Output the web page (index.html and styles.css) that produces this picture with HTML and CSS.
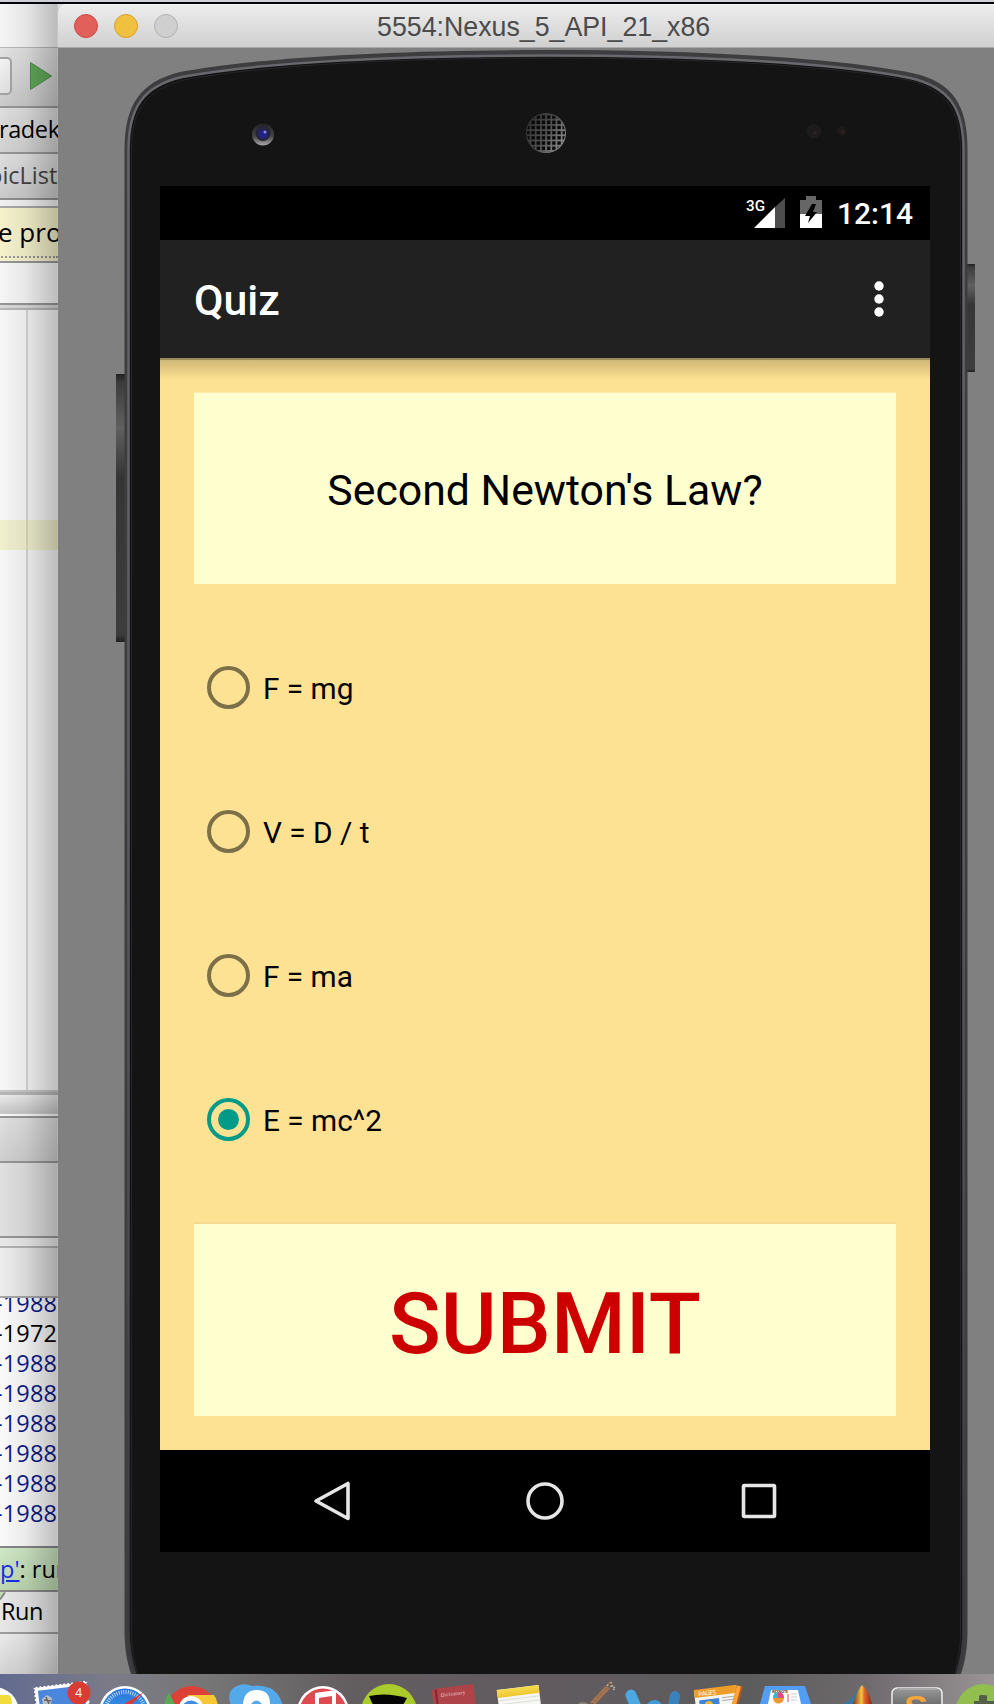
FILE: index.html
```html
<!DOCTYPE html>
<html lang="en">
<head>
<meta charset="utf-8">
<title>5554:Nexus_5_API_21_x86</title>
<link rel="stylesheet" href="styles.css">
</head>
<body>
<div class="desktop">
  <div class="menubar-edge"></div>
  <div class="workspace">
    <aside class="ide">
      <div class="ide-title"></div>
      <div class="ide-toolbar">
        <span class="combo"></span>
        <svg class="play" width="22" height="30" viewBox="0 0 22 30"><path d="M.5 1.500 21.500 15 .5 28.500z" fill="#64ad5b" stroke="#4b9545" stroke-width="1"/></svg>
      </div>
      <div class="ide-crumb"><span>radek</span></div>
      <div class="ide-tab"><span>picList</span></div>
      <div class="ide-gap"></div>
      <div class="ide-notice"><span>e pro</span></div>
      <div class="ide-blank"></div>
      <div class="ide-rule"></div>
      <div class="ide-editor"><div class="gutter"></div><div class="active-line"></div></div>
      <div class="ide-split"></div>
      <div class="ide-panel-a"></div>
      <div class="ide-panel-b"></div>
      <div class="ide-panel-c"></div>
      <div class="ide-panel-d"></div>
      <div class="ide-log">
        <p>-1988</p><p class="dark">-1972</p><p>-1988</p><p>-1988</p><p>-1988</p><p>-1988</p><p>-1988</p><p>-1988</p>
      </div>
      <div class="ide-status"><a>p'</a>: run</div>
      <div class="ide-run"><svg width="6" height="12" viewBox="0 0 6 12"><path d="M0 0H5L0 8z" fill="#c4dfb9"/><path d="M0 7.500 5 .5" stroke="#8b8b8b" stroke-width="2"/></svg><span>Run</span></div>
      <div class="ide-foot"></div>
      <div class="ide-shade"></div>
    </aside>
    <main class="window">
      <header class="titlebar">
        <div class="lights"><i class="red"></i><i class="yellow"></i><i class="off"></i></div>
        <h1>5554:Nexus_5_API_21_x86</h1>
      </header>
      <section class="stage">
        <svg class="device" width="936" height="1626" viewBox="58 48 936 1626">
          <defs>
            <linearGradient id="key" x1="0" y1="0" x2="0" y2="1"><stop offset="0" stop-color="#222"/><stop offset=".03" stop-color="#3b3b3b"/><stop offset=".2" stop-color="#606060"/><stop offset=".38" stop-color="#353535"/><stop offset=".97" stop-color="#3d3d3d"/><stop offset="1" stop-color="#202020"/></linearGradient>
            <linearGradient id="rim" x1="0" y1="0" x2="0" y2="1"><stop offset="0" stop-color="#69696d"/><stop offset=".5" stop-color="#5a5a5e"/><stop offset="1" stop-color="#38383b"/></linearGradient>
            <linearGradient id="lens" x1="0" y1="0" x2="0" y2="1"><stop offset="0" stop-color="#222"/><stop offset=".6" stop-color="#484848"/><stop offset="1" stop-color="#aaa"/></linearGradient>
            <linearGradient id="mesh" x1="0" y1="0" x2="1" y2=".6"><stop offset="0" stop-color="#2a2a2a"/><stop offset=".6" stop-color="#505050"/><stop offset="1" stop-color="#8a8a8a"/></linearGradient>
            <pattern id="holes" width="5.200" height="5.200" patternUnits="userSpaceOnUse"><rect x="1" y="1" width="3.400" height="3.400" fill="#080808"/></pattern>
          </defs>
          <rect x="116" y="374" width="9" height="268" fill="url(#key)"/>
          <rect x="967" y="264" width="8" height="108" fill="url(#key)"/>
          <path d="M134 1682C127 1664 124.500 1650 124.500 1630V150C124.500 105 140 82 180 72C260 57 400 50 545.500 50S832 57 912 73C953 82 967.500 105 967.500 150V1630C967.500 1650 965 1664 958 1682z" fill="#3d3d3f"/>
          <path d="M138 1682C131 1664 128.500 1650 128.500 1630V150C128.500 108 143 86 182 77C262 62 400 55.500 545.500 55.500S830 62 910 78C949 87 963.500 108 963.500 150V1630C963.500 1650 961 1664 954 1682z" fill="#131313" stroke="url(#rim)" stroke-width="2.500"/>
          <path d="M140 1682C134 1664 131.500 1650 131.500 1630V150C131.500 110 146 90 184 80C264 65 400 58 545.500 58S828 65 908 80C946 90 960.500 110 960.500 150V1630C960.500 1650 958 1664 952 1682z" fill="#141414" stroke="#26262a" stroke-width="1"/>
          <circle cx="263" cy="134.500" r="11" fill="url(#lens)"/>
          <circle cx="263" cy="133.500" r="7.500" fill="#26263a"/>
          <circle cx="263" cy="134" r="4.500" fill="#22228a"/>
          <circle cx="265" cy="132" r="1.500" fill="#8b8bcc"/>
          <circle cx="546" cy="133" r="20" fill="url(#mesh)"/>
          <circle cx="546" cy="133" r="19" fill="url(#holes)"/>
          <circle cx="814" cy="131" r="7.500" fill="#1d1b1b"/><circle cx="815.500" cy="133" r="2" fill="#2c211e"/>
          <circle cx="842" cy="131" r="5" fill="#1c1a1a"/><circle cx="842.500" cy="132" r="2" fill="#2c211e"/>
        </svg>
        <div class="screen">
          <div class="status">
            <svg width="40" height="32" viewBox="0 0 40 32"><path d="M8 31 29 10V31z" fill="#fff"/><path d="M29 10 39 1V31H29z" fill="#4d4d4d"/><text x="0" y="14" class="net" textLength="19" lengthAdjust="spacingAndGlyphs">3G</text></svg>
            <svg class="battery" width="22" height="32" viewBox="0 0 22 32"><path d="M0 4H6V0H16V4H22V18H0z" fill="#666"/><path d="M0 18H22V32H0z" fill="#fff"/><path d="M12 8H16L13 16H17L8 27 10 20H5z" fill="#000"/></svg>
            <span class="clock">12:14</span>
          </div>
          <div class="actionbar">
            <h2>Quiz</h2>
            <svg width="10" height="36" viewBox="0 0 10 36"><g fill="#fff"><circle cx="5" cy="5" r="4.700"/><circle cx="5" cy="18" r="4.700"/><circle cx="5" cy="31" r="4.700"/></g></svg>
          </div>
          <div class="quiz">
            <div class="question">Second Newton's Law?</div>
            <div class="answers">
              <div class="answer"><i></i><span>F = mg</span></div>
              <div class="answer"><i></i><span>V = D / t</span></div>
              <div class="answer"><i></i><span>F = ma</span></div>
              <div class="answer checked"><i></i><span>E = mc^2</span></div>
            </div>
            <div class="submit">SUBMIT</div>
          </div>
          <nav class="softkeys">
            <svg width="44" height="44" viewBox="0 0 44 44"><path d="M39 4.500V39.500L7 22z"/></svg>
            <svg width="44" height="44" viewBox="0 0 44 44"><circle cx="22" cy="22" r="17"/></svg>
            <svg width="44" height="44" viewBox="0 0 44 44"><rect x="6.500" y="6.500" width="31" height="31" rx="1"/></svg>
          </nav>
        </div>
      </section>
    </main>
  </div>
  <footer class="dock">
    <svg width="994" height="30" viewBox="0 0 994 30">
      <defs>
        <linearGradient id="safari" x1="0" y1="0" x2="0" y2="1"><stop offset="0" stop-color="#2a72d8"/><stop offset="1" stop-color="#42b8f6"/></linearGradient>
        <linearGradient id="sun" x1="0" y1="0" x2="0" y2="1"><stop offset="0" stop-color="#f6dc54"/><stop offset="1" stop-color="#eec62c"/></linearGradient>
        <linearGradient id="steel" x1="0" y1="0" x2="0" y2="1"><stop offset="0" stop-color="#999"/><stop offset="1" stop-color="#555"/></linearGradient>
        <linearGradient id="peak" x1="0" y1="0" x2="1" y2="0"><stop offset="0" stop-color="#82301c"/><stop offset=".45" stop-color="#f5c542"/><stop offset=".6" stop-color="#e0682a"/><stop offset="1" stop-color="#8e2118"/></linearGradient>
      </defs>
      <circle cx="-6" cy="38" r="25" fill="#fff"/><path d="M0 21H9Q12 23 12 30H0z" fill="#f2dc3c"/>
      <g transform="rotate(-7 36 18)"><rect x="36" y="15" width="50" height="34" fill="#4a87dc" stroke="#fff" stroke-width="4"/><rect x="34" y="13" width="54" height="34" fill="none" stroke="#69708a" stroke-width="2" stroke-dasharray="2 2"/></g>
      <path d="M43 30 42 25 47 21 52 24 51 30z" fill="#b8bdc4"/><path d="M44 26 51 27M46 23 49 30" stroke="#666" stroke-width="1.500"/>
      <circle cx="79" cy="19" r="11.500" fill="#d83c34"/><text x="75.300" y="23" class="badge">4</text>
      <circle cx="125" cy="38" r="26" fill="#fff"/><circle cx="125" cy="38" r="23.500" fill="url(#safari)"/><circle cx="125" cy="38" r="20" fill="none" stroke="#d7ecff" stroke-width="4" stroke-dasharray=".8 1.500"/><path d="M144 18 124 30H132z" fill="#dc3c38"/>
      <circle cx="191.500" cy="38" r="26" fill="#dc4037"/><path d="M188 21H214Q217 25 218 32H188z" fill="#f6c735"/><path d="M169 19Q164 25 165 32H176z" fill="#57a957"/><circle cx="191" cy="34" r="12" fill="#fff"/><circle cx="191" cy="36" r="9.500" fill="#438bdc"/>
      <path d="M231 32Q226 18 235 13Q243 8 252 12Q279 9 283 34z" fill="#53a9e9"/><path d="M243 30Q244 16 257 16T270 30H262Q257 23 251 30z" fill="#fff"/>
      <circle cx="323" cy="38" r="26" fill="#fff"/><circle cx="323" cy="38" r="23.500" fill="#df4950"/><path d="M315 30V19L336 16V30H332V22L319 24V30z" fill="#fff"/>
      <circle cx="389" cy="38" r="28" fill="#abcb2c"/><path d="M369 22Q387 18 407 24L403 31H373z" fill="#050505"/>
      <g transform="rotate(-7 432 18)"><path d="M432 17 435 15H474V50H432z" fill="#ae4449"/><path d="M436 16V40" stroke="#7e292f" stroke-width="2"/><text x="440" y="24" class="book" textLength="25">Dictionary</text></g>
      <g transform="rotate(-7 497 18)"><rect x="497" y="16" width="42" height="30" fill="#f6f6f2"/><rect x="497" y="16" width="42" height="8" fill="url(#sun)"/><path d="M498 27H539M498 31H539" stroke="#ddd"/></g>
      <path d="M592 30 612 9" stroke="#a3744f" stroke-width="5"/><path d="M592 30 612 9" stroke="#624432" stroke-width="1" stroke-dasharray="1 3"/><path d="M606 12 612 8 618 10 613 16z" fill="#665b52"/><path d="M607 11 616 14M611 8 614 16" stroke="#bbb" stroke-width="1.500" stroke-dasharray="1.500 2"/><ellipse cx="583" cy="31" rx="5" ry="3" fill="#898273"/>
      <path d="M631 21 638 38" stroke="#4ba8e2" stroke-width="11" stroke-linecap="round"/><ellipse cx="654.500" cy="36" rx="9" ry="10" fill="#429bd4"/><path d="M675 22 672 38" stroke="#3983bd" stroke-width="10" stroke-linecap="round"/>
      <g transform="rotate(-7 694 18)"><rect x="694" y="17" width="42" height="28" fill="#f7f5ef"/><path d="M694 16H737V24H694z" fill="#ef9d29"/><rect x="698" y="27" width="20" height="12" fill="#3f83d6"/><path d="M721 27H733M721 30H733" stroke="#aaa"/><text x="698" y="23" class="pages" textLength="18">PAGES</text></g><circle cx="709" cy="31" r="4" fill="#edb735"/><path d="M740 12 734 34" stroke="#b45c20" stroke-width="6"/><path d="M739 12 733 34" stroke="#ffa538" stroke-width="4"/>
      <path d="M765 12H805L811 30H760z" fill="#529df5"/><path d="M771 16H798L801 30H768z" fill="#fff"/><text x="772" y="19" class="keynote" textLength="16">KEYNOTE</text><circle cx="778.500" cy="24" r="5.500" fill="#ef9736"/><path d="M778 24V18Q784 18 784 24z" fill="#e9477c"/><path d="M778 24H773Q773 18 778 18z" fill="#36b8cb"/><path d="M788 20V28" stroke="#d64848"/><path d="M791 20H797M791 23H797M791 26H797" stroke="#ccc"/>
      <path d="M842 30Q850 27 853 22 858 18 862 11L868 30z" fill="#3976a2"/><path d="M853 30Q858 15 862 11 868 15 872 30z" fill="url(#peak)"/>
      <rect x="892" y="14" width="50" height="26" rx="5" fill="url(#steel)" stroke="#eee" stroke-width="1.500"/><path d="M897 15H937" stroke="#aaa" stroke-width="2"/><text x="904" y="44" class="sublime" textLength="24" lengthAdjust="spacingAndGlyphs">S</text>
      <circle cx="983.500" cy="38" r="28" fill="#92bd4f"/><path d="M974 30V27H979V22Q979 21 983 21T987 22V27H994V30z" fill="#535f48"/>
    </svg>
  </footer>
</div>
</body>
</html>
```

FILE: styles.css
```css
* { box-sizing: border-box; margin: 0; padding: 0; }
body { width: 994px; height: 1704px; overflow: hidden; background: #808080; }
svg { display: block; flex: none; }
.desktop { display: flex; flex-direction: column; height: 1704px; }
.menubar-edge { height: 4px; background: #cfd0d6; border-bottom: 2px solid #02030a; flex: none; }
.workspace { display: flex; height: 1670px; flex: none; background: #e2e2e2; }

/* IDE visible at the left edge */
.ide { position: relative; width: 58px; overflow: hidden; display: flex; flex-direction: column; font: 500 23.5px "Open Sans", "Noto Sans", sans-serif; color: #000; white-space: nowrap; }
.ide > div { flex: none; }
.ide-title { height: 44px; background: #fafafa; border-bottom: 1px solid #bcbcbc; }
.ide-toolbar { display: flex; align-items: center; gap: 18px; height: 60px; padding-bottom: 2px; background: linear-gradient(#e7e7e7, #cecece); border-bottom: 2px solid #999; }
.combo { width: 12px; height: 38px; border: 2px solid #a8a8a8; border-left: 0; border-radius: 0 5px 5px 0; background: linear-gradient(#f8f8f8, #e5e5e5); }
.ide-crumb { height: 46px; line-height: 42px; background: linear-gradient(#e2e2e2, #d6d6d6); border-bottom: 2px solid #999; }
.ide-crumb span { margin-left: -1px; letter-spacing: -.4px; }
.ide-tab { height: 46px; line-height: 42px; color: #444; background: linear-gradient(#e4e4e4, #cecece); border-bottom: 2px solid #909090; }
.ide-tab span { margin-left: -12px; }
.ide-gap { height: 8px; background: #f6f6f6; border-bottom: 2px solid #aaa; }
.ide-notice { height: 55px; padding-bottom: 4px; background: #faf7d0; border-bottom: 2px solid #999; line-height: 49px; font-size: 26px; }
.ide-notice span { display: block; height: 50px; margin-left: -2px; border-bottom: 2px dotted #999; }
.ide-blank { height: 42px; background: #fbfbfb; border-bottom: 2px solid #999; }
.ide-rule { height: 5px; background: #ddd; border-bottom: 2px solid #bbb; }
.ide-editor { display: flex; position: relative; height: 782px; background: #fcfcfc; border-bottom: 2px solid #ccc; }
.gutter { width: 28px; border-right: 2px solid #d8d8d8; }
.active-line { position: absolute; top: 210px; width: 58px; height: 30px; background: rgba(235, 235, 145, .38); }
.ide-split { height: 26px; border-top: 3px solid #bbb; border-bottom: 2px solid #999; background: linear-gradient(#f0f0f0, #c9c9c9 88%, #fff 89%); }
.ide-panel-a { height: 45px; background: linear-gradient(#e4e4e4, #d3d3d3); border-bottom: 2px solid #999; }
.ide-panel-b { height: 75px; background: #e4e4e4; border-bottom: 2px solid #999; }
.ide-panel-c { height: 10px; background: #ededed; border-bottom: 2px solid #b5b5b5; }
.ide-panel-d { height: 50px; background: linear-gradient(90deg, #f4f4f4, #e0e0e0); border-bottom: 2px solid #aaa; }
.ide-log { height: 250px; overflow: hidden; background: #fff; border-bottom: 2px solid #888; color: #0c1b8c; }
.ide-log p { height: 30px; line-height: 30px; margin-left: -5px; position: relative; top: -10px; letter-spacing: .15px; }
.ide-log .dark { color: #000; }
.ide-status { height: 44px; line-height: 42px; background: linear-gradient(#d3ecc9, #c1dcb5); border-bottom: 2px solid #8c8c8c; }
.ide-status a { color: #1c2ef0; text-decoration: underline; }
.ide-run { display: flex; height: 42px; background: #ececec; border-bottom: 2px solid #a0a0a0; line-height: 39px; }
.ide-run span { margin-left: -5px; letter-spacing: -.4px; }
.ide-foot { height: 40px; background: linear-gradient(#efefef, #d8d8d8); }
.ide-shade { position: absolute; inset: 0; background: linear-gradient(90deg, rgba(0,0,0,.02), rgba(0,0,0,.08) 45%, rgba(0,0,0,.25)); border-right: 1px solid rgba(0,0,0,.2); }

/* Emulator window */
.window { width: 936px; border-radius: 8px 0 0 0; overflow: hidden; background: #808080; }
.titlebar { position: relative; display: flex; align-items: center; height: 44px; background: linear-gradient(#ededed, #d0d0d0); border-bottom: 1px solid #aaa; box-shadow: inset 0 1px #f8f8f8; }
.lights { display: flex; gap: 16px; margin-left: 16px; }
.lights i { width: 24px; height: 24px; border-radius: 50%; border: 1px solid; }
.lights .red { background: #e1605a; border-color: #cc4944; }
.lights .yellow { background: #f0c041; border-color: #d5a02e; }
.lights .off { background: #cfcfcf; border-color: #b2b2b2; }
.titlebar h1 { margin: 3px 0 0 199px; font: 26.75px "Liberation Sans", Arial, sans-serif; color: #4b4b4b; white-space: nowrap; }
.stage { position: relative; height: 1626px; padding: 138px 64px 0 102px; }
.device { position: absolute; left: 0; top: 0; }
.screen { position: relative; width: 770px; height: 1366px; display: flex; flex-direction: column; font-family: Roboto, sans-serif; background: #000; }
.status { display: flex; align-items: center; height: 54px; padding-left: 586px; padding-bottom: 1px; color: #fff; }
.net { font: 500 15px Roboto, sans-serif; fill: #fff; }
.battery { margin: -2px 0 0 14px; }
.clock { margin: 1px 0 0 15px; font-size: 30px; font-weight: 500; }
.actionbar { display: flex; justify-content: space-between; align-items: center; height: 118px; padding: 0 46px 0 34px; background: #212121; color: #fff; }
.actionbar h2 { font-size: 42.8px; font-weight: 500; line-height: 50px; margin-top: 2px; }
.quiz { display: flex; flex-direction: column; height: 1092px; padding: 33px 34px 34px; border-top: 2px solid #9c8b5a; background: linear-gradient(#d0b978, #dfc580 7px, #fde294 20px); }
.question { display: flex; align-items: center; justify-content: center; height: 191px; background: #fffece; box-shadow: 0 -1px #ffecac; font-size: 42.8px; padding-top: 3px; }
.answers { height: 640px; padding: 31px 0 33px 13px; }
.answer { display: flex; align-items: center; height: 144px; gap: 13px; font-size: 29.8px; }
.answer i { width: 43px; height: 43px; border: 4px solid #7c7049; border-radius: 50%; }
.answer span { margin-top: 3px; }
.answer.checked i { border-color: #009a88; padding: 7px; background: #009a88 content-box; }
.submit { display: flex; align-items: center; justify-content: center; height: 192px; background: #fffece; box-shadow: 0 -2px #f3da8e; color: #c00; font-size: 85.6px; font-weight: 500; padding-top: 7px; }
.softkeys { display: flex; height: 102px; padding-left: 149px; gap: 170px; align-items: center; }
.softkeys svg { fill: none; stroke: #e6e6e6; stroke-width: 3.6; stroke-linejoin: round; }

/* Dock */
.dock { height: 30px; background: linear-gradient(90deg, #626b90, #7b7b88 11%, #777 20%, #625d5f 36%, #615b60 56%, #5c5c5c 75%, #6d696c 87%, #999597); }
.badge { font: 12px "Open Sans", sans-serif; fill: #fff; }
.book { font: 5.5px "Liberation Serif", serif; fill: #eecaca; }
.pages { font: 6.500px "Open Sans", sans-serif; fill: #fff; }
.keynote { font: bold 3.500px "Open Sans", sans-serif; fill: #333; }
.sublime { font: bold 32px "Liberation Sans", Arial, sans-serif; fill: #f3a43c; }
```
